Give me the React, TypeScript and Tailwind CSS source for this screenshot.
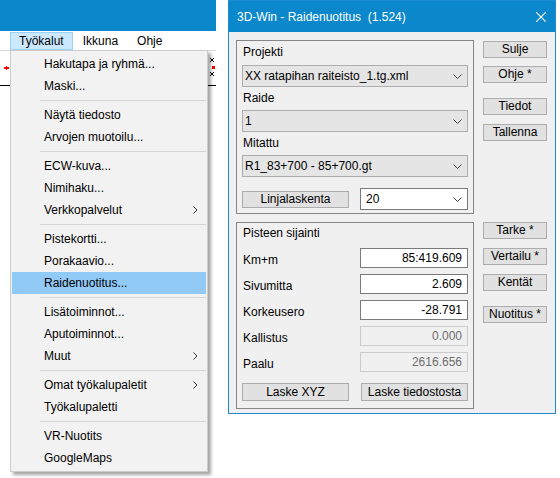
import React from 'react'

type MenuEntry = { label: string; sub?: boolean; active?: boolean } | 'sep'

const menuEntries: MenuEntry[] = [
  { label: 'Hakutapa ja ryhmä...' },
  { label: 'Maski...' },
  'sep',
  { label: 'Näytä tiedosto' },
  { label: 'Arvojen muotoilu...' },
  'sep',
  { label: 'ECW-kuva...' },
  { label: 'Nimihaku...' },
  { label: 'Verkkopalvelut', sub: true },
  'sep',
  { label: 'Pistekortti...' },
  { label: 'Porakaavio...' },
  { label: 'Raidenuotitus...', active: true },
  'sep',
  { label: 'Lisätoiminnot...' },
  { label: 'Aputoiminnot...' },
  { label: 'Muut', sub: true },
  'sep',
  { label: 'Omat työkalupaletit', sub: true },
  { label: 'Työkalupaletti' },
  'sep',
  { label: 'VR-Nuotits' },
  { label: 'GoogleMaps' },
]

const ChevronDown = () => (
  <svg width="9" height="5" viewBox="0 0 9 5">
    <path d="M0.5 0.5 L4.5 4.5 L8.5 0.5" fill="none" stroke="#444" strokeWidth="1" />
  </svg>
)

const ChevronRight = () => (
  <svg width="5" height="8" viewBox="0 0 5 8">
    <path d="M0.5 0.5 L4 4 L0.5 7.5" fill="none" stroke="#333" strokeWidth="1" />
  </svg>
)

const Dropdown = () => (
  <div className="absolute left-[10px] top-[50px] w-[198px] border border-[#cccccc] bg-[#f2f2f2] px-px py-[2px] shadow-[3px_3px_3px_rgba(0,0,0,0.35)]">
    {menuEntries.map((entry, i) =>
      entry === 'sep' ? (
        <div key={i} className="h-[7px] flex items-center pl-[28px]">
          <div className="h-px w-full bg-[#d5d5d5]" />
        </div>
      ) : (
        <div
          key={i}
          className={`h-[22px] flex items-center justify-between pl-[32px] pr-[8px] ${entry.active ? 'bg-[#91c9f7]' : ''}`}
        >
          <span>{entry.label}</span>
          {entry.sub && <ChevronRight />}
        </div>
      ),
    )}
  </div>
)

const Label = ({ text, className = '' }: { text: string; className?: string }) => (
  <div className={`h-[20px] leading-[20px] pl-px ${className}`}>{text}</div>
)

const Combo = ({ value, white }: { value: string; white?: boolean }) => (
  <div
    className={`h-[22px] flex items-center justify-between border pr-[5px] ${white ? 'bg-white border-[#7a7a7a] pl-[5px]' : 'bg-[#e5e5e5] border-[#adadad] pl-[2px]'}`}
  >
    <span>{value}</span>
    <ChevronDown />
  </div>
)

const Button = ({ text, className = '' }: { text: string; className?: string }) => (
  <button
    className={`h-[17px] bg-[#e1e1e1] border border-[#adadad] leading-[15px] text-center ${className}`}
  >
    {text}
  </button>
)

const ValueRow = ({ label, value, disabled }: { label: string; value: string; disabled?: boolean }) => (
  <div className="h-[20px] flex items-center justify-between">
    <span className="pl-px mt-[4px]">{label}</span>
    <div
      className={`w-[108px] h-[20px] border leading-[18px] text-right pr-[5px] ${disabled ? 'bg-[#f0f0f0] border-[#cccccc] text-[#6d6d6d]' : 'bg-white border-[#7a7a7a]'}`}
    >
      {value}
    </div>
  </div>
)

export default function App() {
  return (
    <div className="w-[560px] h-[478px] bg-white flex items-start overflow-hidden font-['Liberation_Sans',Arial,sans-serif] text-[12px] text-black">
      {/* main application behind the dialog */}
      <div className="relative w-[216px] h-full flex flex-col">
        <div className="h-[31px] bg-[#0b87cb]" />
        <div className="h-[19px] flex pt-px pl-[10px]">
          <div className="h-[18px] px-[8px] border border-[#99d1ff] bg-[#cce8ff] leading-[16px]">Työkalut</div>
          <div className="h-[18px] px-[9px] leading-[18px] ml-px">Ikkuna</div>
          <div className="h-[18px] px-[10px] leading-[18px]">Ohje</div>
        </div>
        <div className="flex-1 border-t border-[#dadada]">
          <svg width="216" height="427" viewBox="0 0 216 427">
            <line x1="0" y1="34.5" x2="216" y2="34.5" stroke="#000" strokeWidth="1" />
            <rect x="4" y="16" width="5" height="2" fill="#ff0000" />
            <rect x="6" y="15" width="1" height="4" fill="#ff0000" />
            <path d="M210 7 L214 11 M214 7 L210 11" stroke="#000" strokeWidth="1" />
            <rect x="212" y="15" width="3" height="3" fill="#ff0000" />
            <path d="M210 21 L214 25 M214 21 L210 25" stroke="#000" strokeWidth="1" />
          </svg>
        </div>
        <Dropdown />
      </div>

      {/* dialog */}
      <div className="ml-[12px] w-[328px] h-[414px] border border-[#1c8ad6] bg-[#f0f0f0] flex flex-col">
        <div className="h-[31px] bg-[#0b87cb] flex items-center justify-between pl-[8px] pr-[9px] text-white whitespace-pre">
          <span>3D-Win - Raidenuotitus  (1.524)</span>
          <svg width="10" height="10" viewBox="0 0 10 10">
            <path d="M0 0 L10 10 M10 0 L0 10" stroke="#fff" strokeWidth="1.1" />
          </svg>
        </div>

        <div className="flex pl-[7px] pr-[8px] pt-[8px] gap-[9px]">
          <div className="w-[238px] flex flex-col gap-[8px]">
            <div className="h-[174px] border border-[#868686] px-[5px] flex flex-col">
              <Label text="Projekti" className="mt-px" />
              <div className="mt-[3px]">
                <Combo value="XX ratapihan raiteisto_1.tg.xml" />
              </div>
              <Label text="Raide" className="mt-px" />
              <div className="mt-[2px]">
                <Combo value="1" />
              </div>
              <Label text="Mitattu" className="mt-px" />
              <div className="mt-[2px]">
                <Combo value="R1_83+700 - 85+700.gt" />
              </div>
              <div className="mt-[11px] flex items-center justify-between">
                <Button text="Linjalaskenta" className="w-[107px]" />
                <div className="w-[108px]">
                  <Combo value="20" white />
                </div>
              </div>
            </div>

            <div className="h-[187px] border border-[#868686] px-[5px] flex flex-col">
              <Label text="Pisteen sijainti" />
              <div className="mt-[5px] flex flex-col gap-[6px]">
                <ValueRow label="Km+m" value="85:419.609" />
                <ValueRow label="Sivumitta" value="2.609" />
                <ValueRow label="Korkeusero" value="-28.791" />
                <ValueRow label="Kallistus" value="0.000" disabled />
                <ValueRow label="Paalu" value="2616.656" disabled />
              </div>
              <div className="mt-[11px] flex justify-between">
                <Button text="Laske XYZ" className="w-[107px] h-[18px]" />
                <Button text="Laske tiedostosta" className="w-[107px] h-[18px]" />
              </div>
            </div>
          </div>

          <div className="w-[64px] flex flex-col pt-px">
            <Button text="Sulje" />
            <Button text="Ohje *" className="mt-[8px]" />
            <Button text="Tiedot" className="mt-[15px]" />
            <Button text="Tallenna" className="mt-[9px]" />
            <Button text="Tarke *" className="mt-[81px]" />
            <Button text="Vertailu *" className="mt-[9px]" />
            <Button text="Kentät" className="mt-[9px]" />
            <Button text="Nuotitus *" className="mt-[15px]" />
          </div>
        </div>
      </div>
    </div>
  )
}
